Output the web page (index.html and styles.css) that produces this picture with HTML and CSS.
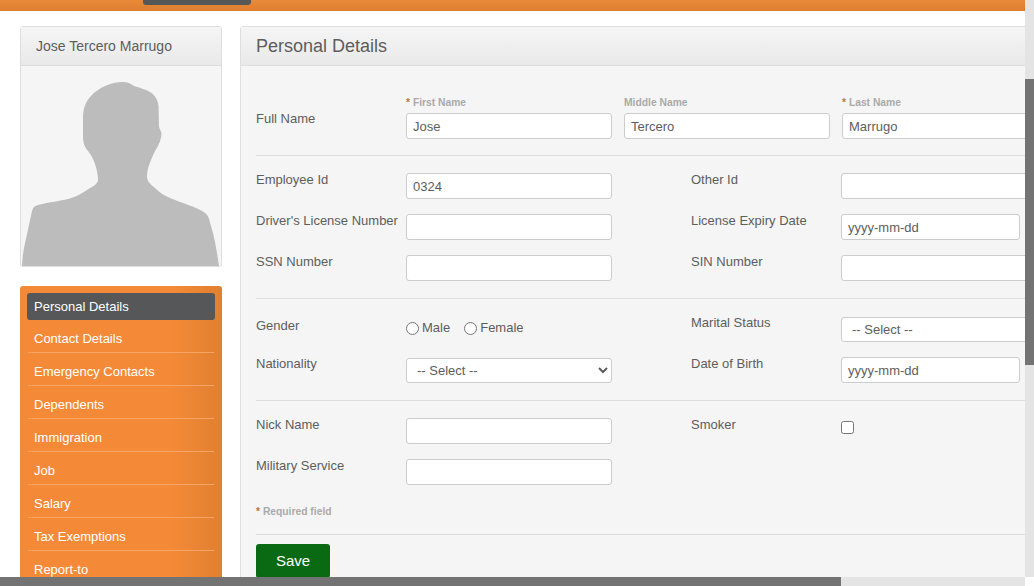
FILE: index.html
```html
<!DOCTYPE html>
<html lang="en">
<head>
    <meta charset="UTF-8">
    <meta name="viewport" content="width=device-width, initial-scale=1.0">
    <title>Personal Details</title>
    <link rel="stylesheet" href="styles.css">
</head>
<body>
    <div class="window">
        <div class="page">
            <div class="topbar"><div class="toptab"></div></div>
            <div class="layout">
                <aside class="sidebar">
                    <div class="box">
                        <div class="box-head">Jose Tercero Marrugo</div>
                        <div class="photo">
                            <svg viewBox="21 66 200 200" width="200" height="200">
                                <path fill="#bcbcbc" d="M22 266 C22.500 258 23 254 24 248 L32 211 C33 207 35 206 38 205 C50 202 60 201 68 199 C76 197 82 193 87 190 C92 187 98 184 98 180 C98 175 97 170 95 164 C93 158 91 155 88 151 C84 146 83 142 83 136 L83 118 C83 108 86 101 91 96 C98 88 111 82 123 82 C128 82 131 84 134 86 C140 88 145 89 150 92 C155 95 158 100 158.500 106 L159 127 L161.500 133 C161.500 139 159 145 155 151 C151 160 147 168 147 176 C147 181 150 184 155 188 C159 192 163 195 168 197 C176 201 187 204 196 208 C203 211 208 214 209 219 L213 233 C215 241 217 252 219 266 Z"/>
                            </svg>
                        </div>
                    </div>
                    <ul class="menu">
                        <li class="current"><a href="#">Personal Details</a></li>
                        <li><a href="#">Contact Details</a></li>
                        <li><a href="#">Emergency Contacts</a></li>
                        <li><a href="#">Dependents</a></li>
                        <li><a href="#">Immigration</a></li>
                        <li><a href="#">Job</a></li>
                        <li><a href="#">Salary</a></li>
                        <li><a href="#">Tax Exemptions</a></li>
                        <li><a href="#">Report-to</a></li>
                    </ul>
                </aside>

                <main class="panel">
                    <h1 class="panel-head">Personal Details</h1>
                    <form class="panel-body">
                        <div class="section first">
                            <div class="name-row">
                                <label class="name-label">Full Name</label>
                                <div class="field">
                                    <span class="sub"><em>*</em> First Name</span>
                                    <input type="text" value="Jose">
                                </div>
                                <div class="field">
                                    <span class="sub">Middle Name</span>
                                    <input type="text" value="Tercero">
                                </div>
                                <div class="field">
                                    <span class="sub"><em>*</em> Last Name</span>
                                    <input type="text" value="Marrugo">
                                </div>
                            </div>
                        </div>

                        <div class="section">
                            <div class="row">
                                <label>Employee Id</label>
                                <input type="text" value="0324">
                                <label class="right">Other Id</label>
                                <input type="text">
                            </div>
                            <div class="row">
                                <label>Driver's License Number</label>
                                <input type="text">
                                <label class="right">License Expiry Date</label>
                                <input class="date" type="text" placeholder="yyyy-mm-dd">
                            </div>
                            <div class="row">
                                <label>SSN Number</label>
                                <input type="text">
                                <label class="right">SIN Number</label>
                                <input type="text">
                            </div>
                        </div>

                        <div class="section">
                            <div class="row">
                                <label class="gender-label">Gender</label>
                                <div class="radios">
                                    <label class="radio"><input type="radio" name="gender">Male</label>
                                    <label class="radio"><input type="radio" name="gender">Female</label>
                                </div>
                                <label class="right">Marital Status</label>
                                <select><option>-- Select --</option></select>
                            </div>
                            <div class="row">
                                <label>Nationality</label>
                                <select><option>-- Select --</option></select>
                                <label class="right">Date of Birth</label>
                                <input class="date" type="text" placeholder="yyyy-mm-dd">
                            </div>
                        </div>

                        <div class="section last">
                            <div class="row">
                                <label>Nick Name</label>
                                <input type="text">
                                <label class="right">Smoker</label>
                                <input class="check" type="checkbox">
                            </div>
                            <div class="row">
                                <label>Military Service</label>
                                <input type="text">
                            </div>
                            <p class="note"><em>*</em> Required field</p>
                        </div>

                        <button class="save" type="button">Save</button>
                    </form>
                </main>
            </div>
        </div>
        <div class="vbar"><div class="vthumb"></div></div>
        <div class="hbar"><div class="hthumb"></div></div>
        <div class="corner"></div>
    </div>
</body>
</html>
```

FILE: styles.css
```css
* {
    box-sizing: border-box;
}

html, body {
    margin: 0;
    height: 100%;
    overflow: hidden;
}

body {
    font-family: "Liberation Sans", Arial, sans-serif;
    font-size: 13px;
    color: #5d5d5d;
    background: #fff;
}

/* page + fake scrollbars */
.window {
    display: grid;
    grid-template-columns: 1025px 9px;
    grid-template-rows: 577px 9px;
    height: 586px;
}

.page {
    overflow: hidden;
}

.vbar {
    background: #e4e4e4;
    padding-top: 79px;
}

.vthumb {
    height: 286px;
    background: #737373;
}

.hbar {
    background: #e4e4e4;
}

.hthumb {
    width: 841px;
    height: 9px;
    background: #737373;
}

.corner {
    background: #fff;
}

/* top bar */
.topbar {
    height: 11px;
    padding-left: 143px;
    background: linear-gradient(#e98a39, #de7f31);
}

.toptab {
    width: 108px;
    height: 5px;
    background: #555759;
    border-radius: 0 0 3px 3px;
}

.layout {
    display: flex;
    gap: 18px;
    padding: 15px 0 0 20px;
}

/* left column */
.sidebar {
    flex: none;
    width: 202px;
}

.box {
    border: 1px solid #dedede;
    border-radius: 3px;
    background: #f5f5f5;
    margin-bottom: 19px;
}

.box-head {
    height: 39px;
    padding-left: 15px;
    font-size: 14px;
    line-height: 38px;
    background: linear-gradient(#f5f5f5, #e9e9e9);
    border-bottom: 1px solid #dedede;
}

.photo {
    height: 200px;
}

.photo svg {
    display: block;
}

.menu {
    list-style-type: none;
    margin: 0;
    padding: 7px 7px 20px;
    border-radius: 3px;
    background: linear-gradient(to right, #f48a38 75%, #e0802f);
}

.menu li {
    height: 33px;
    margin: 0 1px;
    border-bottom: 1px solid #f6a566;
}

.menu a {
    display: block;
    padding-left: 6px;
    line-height: 37px;
    color: #fff;
    text-decoration: none;
}

.menu .current {
    height: 27px;
    margin: 0;
    border: none;
    border-radius: 3px;
    background: #555759;
}

.menu .current a {
    padding-left: 7px;
    line-height: 27px;
}

.menu li:last-child {
    border-bottom: none;
}

/* right panel */
.panel {
    flex: none;
    width: 840px;
    height: 620px;
    border: 1px solid #dedede;
    border-radius: 3px;
    background: #f5f5f5;
}

.panel-head {
    height: 39px;
    margin: 0;
    padding-left: 15px;
    font-size: 18px;
    font-weight: normal;
    line-height: 38px;
    background: linear-gradient(#f5f5f5, #e9e9e9);
    border-bottom: 1px solid #dedede;
}

.panel-body {
    padding: 0 15px;
}

.section {
    padding: 17px 0;
    border-bottom: 1px solid #dedede;
}

.section.first {
    padding: 30px 0 16px;
}

.section.last {
    padding-bottom: 16px;
}

.name-row {
    display: grid;
    grid-template-columns: 138px 206px 206px 206px;
    column-gap: 12px;
    margin-right: -36px;
}

.name-row .name-label {
    margin-top: 15px;
}

.field {
    display: flex;
    flex-direction: column;
}

.sub {
    height: 17px;
    font-size: 10.300px;
    font-weight: bold;
    line-height: 13px;
    color: #aaa;
}

em {
    font-style: normal;
    color: #b5793f;
}

.row {
    display: grid;
    grid-template-columns: 150px 206px 150px 206px;
    column-gap: 0;
    margin-bottom: 15px;
}

.section > .row:last-child {
    margin-bottom: 0;
}

.row label {
    line-height: 13px;
}

.row .right {
    margin-left: 79px;
    margin-right: -79px;
}

.row > :nth-child(4) {
    margin-left: 79px;
    width: 206px;
}

.row .gender-label {
    margin-top: 3px;
}

input[type="text"], select {
    height: 26px;
    padding: 0 6px;
    font-family: inherit;
    font-size: 13px;
    color: #5d5d5d;
    background: #fff;
    border: 1px solid #ccc;
    border-radius: 3px;
    outline: none;
}

input::placeholder {
    color: #5d5d5d;
    opacity: 1;
}

select {
    height: 25px;
    margin-top: 1px;
}

.row input.date {
    width: 179px;
}

.radios {
    display: flex;
    gap: 14px;
    padding-top: 2px;
}

.row .radio {
    display: flex;
    align-items: center;
    gap: 3px;
    height: 20px;
    line-height: 14px;
}

.radio input {
    width: 13px;
    height: 13px;
    margin: 0;
}

.row .check {
    width: 13px;
    height: 13px;
    margin-top: 3px;
}

.note {
    margin: 20px 0 0;
    font-size: 10.300px;
    font-weight: bold;
    line-height: 13px;
    color: #aaa;
}

.save {
    display: block;
    width: 74px;
    height: 34px;
    margin-top: 9px;
    padding: 0 0 2px;
    font-family: inherit;
    font-size: 15px;
    color: #fff;
    background: #0a6a14;
    border: none;
    border-radius: 3px;
}
```
